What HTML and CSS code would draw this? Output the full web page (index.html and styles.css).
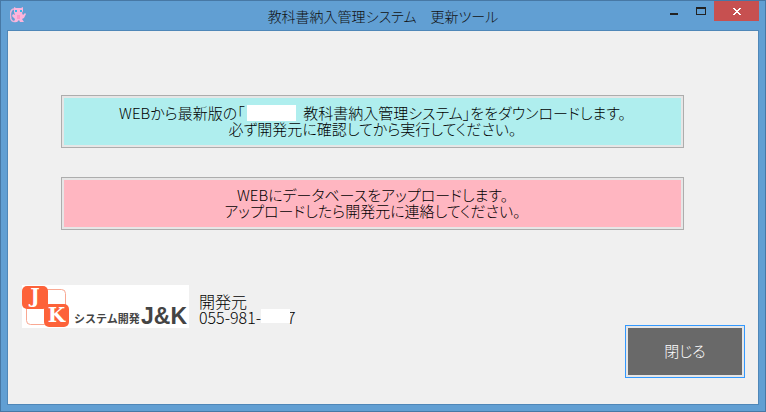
FILE: index.html
```
<!DOCTYPE html>
<html lang="ja">
<head>
<meta charset="utf-8">
<title>教科書納入管理システム 更新ツール</title>
<link rel="stylesheet" href="styles.css">
</head>
<body>
<div class="window">
  <header class="titlebar">
    <svg class="app-icon" viewBox="0 0 16 16" aria-hidden="true">
      <path d="M4 2C0 2 0 8 1 12c1 3 3 3 6 2" fill="none" stroke="#e6b4dc" stroke-width="1.5"/>
      <path d="M4 0l2 1h5l2-1v4l-1 2 1 2 2-2 1 1-2 4-2 1 2 3h-4l-1-2-2 2H4l1-3-3-3 1-2 2 1-1-3z" fill="#fbb5dc"/>
      <path d="M7 8h3v4H7z" fill="#f99ac9"/>
      <path d="M5 3h2v2H5zM10 3h2v2h-2z" fill="#35b9e8"/>
    </svg>
    <h1 class="title">教科書納入管理システム&emsp;更新ツール</h1>
    <div class="caption-buttons">
      <button class="caption" type="button" aria-label="最小化">
        <svg viewBox="0 0 10 8" width="10" height="8"><path d="M1 6h8v2H1z" fill="#222"/></svg>
      </button>
      <button class="caption" type="button" aria-label="最大化">
        <svg viewBox="0 0 10 8" width="10" height="8"><path d="M0 0h10v8H0zM1 2v5h8V2z" fill="#222" fill-rule="evenodd"/></svg>
      </button>
      <button class="caption caption-close" type="button" aria-label="ウィンドウを閉じる">
        <svg viewBox="0 0 8 7" width="8" height="7" shape-rendering="crispEdges"><path d="M0 0h2v1H0zM6 0h2v1H6zM1 1h2v1H1zM5 1h2v1H5zM2 2h4v1H2zM3 3h2v1H3zM2 4h4v1H2zM1 5h2v1H1zM5 5h2v1H5zM0 6h2v1H0zM6 6h2v1H6z" fill="#fff"/></svg>
      </button>
    </div>
  </header>
  <main class="client">
    <div class="actions">
      <button class="action download" type="button">WEBから最新版の「<span class="mask mask-name"></span>&ensp;教科書納入管理システム」ををダウンロードします。<br>必ず開発元に確認してから実行してください。</button>
      <button class="action upload" type="button">WEBにデータベースをアップロードします。<br>アップロードしたら開発元に連絡してください。</button>
    </div>
    <footer class="footer">
      <svg class="logo" viewBox="0 0 167 43" width="167" height="43" role="img" aria-label="システム開発 J&amp;K">
        <path d="M0 0h167v43H0z" fill="#fff"/>
        <rect x="21.500" y="4.500" width="22" height="22" rx="4" fill="#fff" stroke="#f9a892"/>
        <rect x="4.500" y="19.500" width="22" height="20" rx="4" fill="#fff" stroke="#f9a892"/>
        <rect x="0" y="1" width="26" height="23" rx="5" fill="#fd6239"/>
        <rect x="22" y="19" width="25" height="23" rx="5" fill="#fd6239"/>
        <text class="logo-letter" x="13" y="18" text-anchor="middle">J</text>
        <text class="logo-letter" x="34.500" y="37" text-anchor="middle">K</text>
        <text class="logo-small" x="52" y="38">システム開発</text>
        <text class="logo-name" x="119" y="39">J&amp;K</text>
      </svg>
      <p class="contact">開発元<br>055-981-<span class="mask mask-phone"></span>7</p>
      <button class="close" type="button">閉じる</button>
    </footer>
  </main>
</div>
</body>
</html>
```
FILE: styles.css
```
* { box-sizing: border-box; }

body {
  margin: 0;
  font-family: "Noto Sans CJK JP", sans-serif;
  font-size: 15px;
  font-weight: 300;
  line-height: 16px;
  font-feature-settings: "palt";
  color: #000;
}

button {
  font: inherit;
  font-feature-settings: inherit;
  color: inherit;
  padding: 0;
  border: 0;
  background: none;
}

.window {
  display: flex;
  flex-direction: column;
  min-height: 100vh;
  padding: 0 6px 6px;
  border: 1px solid #4778a5;
  background: #619fd3;
}

.titlebar {
  position: relative;
  display: flex;
  align-items: flex-start;
  justify-content: space-between;
  height: 29px;
}

.app-icon {
  width: 16px;
  height: 16px;
  margin: 6px 3px;
}

.title {
  position: absolute;
  inset: 0;
  margin: 0;
  text-align: center;
  font-size: 14px;
  font-weight: 300;
  line-height: 30px;
  color: #111;
  pointer-events: none;
}

.caption-buttons { display: flex; }

.caption {
  display: flex;
  align-items: center;
  justify-content: center;
  width: 27px;
  height: 20px;
}

.caption-close {
  width: 45px;
  background: #c75050;
}

.client {
  flex: 1;
  display: flex;
  flex-direction: column;
  justify-content: space-between;
  padding: 64px 13px 26px 14px;
  border: 1px solid #4f87b8;
  background: #f0f0f0;
}

.actions {
  display: grid;
  gap: 29px;
  margin: 0 61px 0 39px;
}

.action,
.close {
  height: 53px;
  padding-bottom: 2px;
  border: 1px solid #adadad;
  box-shadow: inset 0 0 0 2px #e6e6e6;
}

.download { background: #afeeee; }
.upload { background: #ffb6c1; }

.mask {
  display: inline-block;
  vertical-align: top;
  background: #fff;
}

.mask-name {
  width: 49px;
  height: 16px;
  margin-left: 2px;
}

.mask-phone {
  position: relative;
  width: 29px;
  height: 14px;
  margin-right: -3px;
}

.footer {
  display: flex;
  align-items: flex-start;
}

.contact {
  margin: 8px 0 0 10px;
  font-size: 16px;
}

.close {
  width: 120px;
  margin: 40px 0 0 auto;
  border-color: #3399ff;
  background: #696969;
  color: #fff;
}

.logo-letter {
  font: bold 20px "DejaVu Serif", serif;
  fill: #fff;
}

.logo-small {
  font: bold 11px "Noto Sans CJK JP", sans-serif;
  fill: #444;
}

.logo-name {
  font: bold 23px "Liberation Sans", sans-serif;
  fill: #444;
}
```
